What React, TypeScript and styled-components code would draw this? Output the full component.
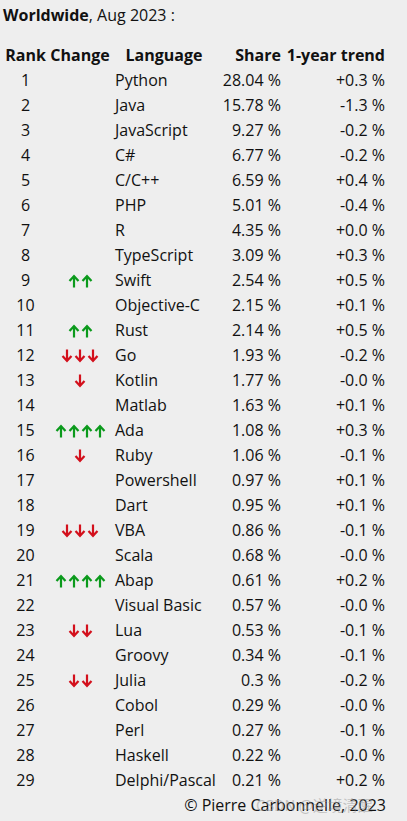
import React from 'react'
import styled, { createGlobalStyle } from 'styled-components'

const GlobalStyle = createGlobalStyle`
  html, body {
    margin: 0;
    padding: 0;
    background: #eeeeee;
  }
  body {
    font-family: "Open Sans", "Noto Sans", sans-serif;
    color: #111111;
  }
`

const Page = styled.div`
  position: relative;
  width: 407px;
  height: 821px;
  padding: 0 0 0 3px;
  box-sizing: border-box;
  overflow: hidden;
`
const Title = styled.div`
  height: 30px;
  line-height: 30px;
  font-size: 16px;
  margin-bottom: 13px;
  b {
    font-weight: 700;
  }
`
const Row = styled.div<{ $head?: boolean }>`
  display: grid;
  grid-template-columns: 45px 64px 104px 66px 104px;
  height: 25px;
  line-height: 25px;
  font-size: 16px;
  font-weight: ${p => (p.$head ? 700 : 400)};
  white-space: nowrap;
`
const Rank = styled.div`
  text-align: center;
`
const Change = styled.div`
  display: flex;
  align-items: center;
  justify-content: center;
  gap: 1px;
`
const ArrowSvg = styled.svg<{ $up: boolean }>`
  display: block;
  width: 12px;
  height: 14px;
  color: ${p => (p.$up ? '#0b9a1c' : '#d3101c')};
  transform: ${p => (p.$up ? 'none' : 'rotate(180deg)')};
`
const Lang = styled.div<{ $head?: boolean }>`
  text-align: ${p => (p.$head ? 'center' : 'left')};
  padding-left: ${p => (p.$head ? '0' : '3px')};
`
const Num = styled.div`
  text-align: right;
  padding-right: 1px;
`
const Footer = styled.div`
  width: 383px;
  height: 25px;
  line-height: 25px;
  font-size: 16px;
  text-align: right;
`
const Watermark = styled.span`
  position: absolute;
  left: 256px;
  top: 794px;
  font-family: "Noto Sans CJK SC", sans-serif;
  font-size: 15px;
  color: rgba(150, 150, 150, 0.5);
  pointer-events: none;
`

type Item = [string, number, string, string]

const rows: Item[] = [
  ['Python', 0, '28.04 %', '+0.3 %'],
  ['Java', 0, '15.78 %', '-1.3 %'],
  ['JavaScript', 0, '9.27 %', '-0.2 %'],
  ['C#', 0, '6.77 %', '-0.2 %'],
  ['C/C++', 0, '6.59 %', '+0.4 %'],
  ['PHP', 0, '5.01 %', '-0.4 %'],
  ['R', 0, '4.35 %', '+0.0 %'],
  ['TypeScript', 0, '3.09 %', '+0.3 %'],
  ['Swift', 2, '2.54 %', '+0.5 %'],
  ['Objective-C', 0, '2.15 %', '+0.1 %'],
  ['Rust', 2, '2.14 %', '+0.5 %'],
  ['Go', -3, '1.93 %', '-0.2 %'],
  ['Kotlin', -1, '1.77 %', '-0.0 %'],
  ['Matlab', 0, '1.63 %', '+0.1 %'],
  ['Ada', 4, '1.08 %', '+0.3 %'],
  ['Ruby', -1, '1.06 %', '-0.1 %'],
  ['Powershell', 0, '0.97 %', '+0.1 %'],
  ['Dart', 0, '0.95 %', '+0.1 %'],
  ['VBA', -3, '0.86 %', '-0.1 %'],
  ['Scala', 0, '0.68 %', '-0.0 %'],
  ['Abap', 4, '0.61 %', '+0.2 %'],
  ['Visual Basic', 0, '0.57 %', '-0.0 %'],
  ['Lua', -2, '0.53 %', '-0.1 %'],
  ['Groovy', 0, '0.34 %', '-0.1 %'],
  ['Julia', -2, '0.3 %', '-0.2 %'],
  ['Cobol', 0, '0.29 %', '-0.0 %'],
  ['Perl', 0, '0.27 %', '-0.1 %'],
  ['Haskell', 0, '0.22 %', '-0.0 %'],
  ['Delphi/Pascal', 0, '0.21 %', '+0.2 %'],
]

const Arrow = ({ up }: { up: boolean }) => (
  <ArrowSvg $up={up} viewBox="0 0 12 14" fill="none" stroke="currentColor" strokeWidth={2.2}>
    <path d="M6 2.5V13.5" />
    <path d="M1.5 7L6 2.2L10.5 7" strokeLinejoin="miter" />
  </ArrowSvg>
)

const ChangeCell = ({ n }: { n: number }) => {
  const up = n > 0
  return (
    <Change>
      {Array.from({ length: Math.abs(n) }, (_, k) => (
        <Arrow key={k} up={up} />
      ))}
    </Change>
  )
}

const App = () => {
  return (
    <Page>
      <GlobalStyle />
      <Title>
        <b>Worldwide</b>, Aug 2023 :
      </Title>
      <Row $head>
        <Rank>Rank</Rank>
        <Rank>Change</Rank>
        <Lang $head>Language</Lang>
        <Num>Share</Num>
        <Num>1-year trend</Num>
      </Row>
      {rows.map(([lang, change, share, trend], i) => (
        <Row key={lang}>
          <Rank>{i + 1}</Rank>
          <ChangeCell n={change} />
          <Lang>{lang}</Lang>
          <Num>{share}</Num>
          <Num>{trend}</Num>
        </Row>
      ))}
      <Footer>© Pierre Carbonnelle, 2023</Footer>
      <Watermark>CSDN @逆境清醒</Watermark>
    </Page>
  )
}

export default App
